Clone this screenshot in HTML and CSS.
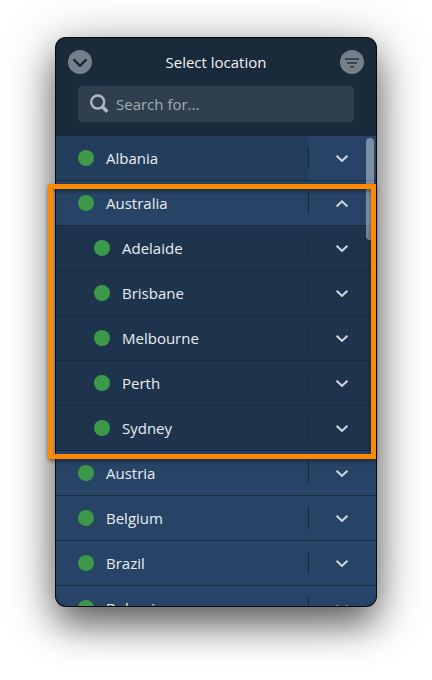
FILE: index.html
```
<!DOCTYPE html>
<html lang="en">
<head>
<meta charset="utf-8">
<title>Select location</title>
<link rel="stylesheet" href="styles.css">
</head>
<body>
<svg width="0" height="0" class="defs" aria-hidden="true">
  <symbol id="chevron" viewBox="0 0 14 8"><path d="M1.600 .7 7 5.900 12.400 .7" fill="none" stroke="currentColor" stroke-width="2"/></symbol>
</svg>
<main class="window">
  <header class="header">
    <div class="titlebar">
      <button class="round" aria-label="Close"><svg width="24" height="24" viewBox="0 0 24 24"><path d="M6.200 10 12 15.800 17.800 10" fill="none" stroke="#192a3b" stroke-width="2.400" stroke-linecap="round" stroke-linejoin="round"/></svg></button>
      <h1 class="title">Select location</h1>
      <button class="round" aria-label="Filter"><svg width="24" height="24" viewBox="0 0 24 24"><path d="M5 8h14v2H5zM7 12h10v2H7zM10 16h4v1l-1 1h-2l-1-1z" fill="#344452"/></svg></button>
    </div>
    <div class="search">
      <svg width="20" height="20" viewBox="0 0 20 20"><circle cx="7.700" cy="8" r="6.500" fill="none" stroke="currentColor" stroke-width="2.400"/><path d="M12 12.300 17.300 17.800" stroke="currentColor" stroke-width="3.400" fill="none"/></svg>
      <span>Search for...</span>
    </div>
  </header>
  <div class="list">
    <div class="row hovered"><div class="place"><i class="dot"></i><span>Albania</span></div><div class="toggle"><svg class="chev"><use href="#chevron"/></svg></div></div>
    <div class="row"><div class="place"><i class="dot"></i><span>Australia</span></div><div class="toggle"><svg class="chev up"><use href="#chevron"/></svg></div></div>
    <div class="row city"><div class="place"><i class="dot"></i><span>Adelaide</span></div><div class="toggle"><svg class="chev"><use href="#chevron"/></svg></div></div>
    <div class="row city"><div class="place"><i class="dot"></i><span>Brisbane</span></div><div class="toggle"><svg class="chev"><use href="#chevron"/></svg></div></div>
    <div class="row city"><div class="place"><i class="dot"></i><span>Melbourne</span></div><div class="toggle"><svg class="chev"><use href="#chevron"/></svg></div></div>
    <div class="row city"><div class="place"><i class="dot"></i><span>Perth</span></div><div class="toggle"><svg class="chev"><use href="#chevron"/></svg></div></div>
    <div class="row city"><div class="place"><i class="dot"></i><span>Sydney</span></div><div class="toggle"><svg class="chev"><use href="#chevron"/></svg></div></div>
    <div class="row"><div class="place"><i class="dot"></i><span>Austria</span></div><div class="toggle"><svg class="chev"><use href="#chevron"/></svg></div></div>
    <div class="row"><div class="place"><i class="dot"></i><span>Belgium</span></div><div class="toggle"><svg class="chev"><use href="#chevron"/></svg></div></div>
    <div class="row"><div class="place"><i class="dot"></i><span>Brazil</span></div><div class="toggle"><svg class="chev"><use href="#chevron"/></svg></div></div>
    <div class="row"><div class="place"><i class="dot"></i><span>Bulgaria</span></div><div class="toggle"><svg class="chev"><use href="#chevron"/></svg></div></div>
    <div class="scrollbar"></div>
  </div>
</main>
<div class="highlight"></div>
</body>
</html>
```
FILE: styles.css
```
* { box-sizing: border-box; }
body {
  margin: 0;
  height: 680px;
  padding: 38px 56px;
  overflow: hidden;
  position: relative;
  background: #fff;
  font: 15px/20px "Open Sans", sans-serif;
  color: #e9edf1;
}
.defs { position: absolute; }
.window {
  width: 320px;
  height: 568px;
  border-radius: 10px;
  overflow: hidden;
  background: #192a3b;
  box-shadow: 0 0 0 1px #05090d, 0 18px 36px rgba(0, 0, 0, .54), 0 6px 56px rgba(0, 0, 0, .28);
}
.header { height: 98px; padding: 12px 12px 0; }
.titlebar { display: flex; align-items: center; justify-content: space-between; height: 24px; }
.title { margin: 0; font-size: 15px; font-weight: 400; color: #f1f3f5; }
.round {
  width: 24px;
  height: 24px;
  padding: 0;
  border: 0;
  border-radius: 50%;
  background: #75808a;
}
.round svg { display: block; }
.search {
  display: flex;
  align-items: center;
  gap: 6px;
  height: 36px;
  margin: 12px 10px 0;
  padding: 0 12px;
  border-radius: 4px;
  background: #303f4e;
  color: #a3abb2;
}
.search svg { color: #b0b7bd; }
.list { position: relative; height: 470px; overflow: hidden; }
.row { display: flex; height: 45px; border-bottom: 1px solid #192c40; background: #274366; }
.place { flex: 1; display: flex; align-items: center; gap: 12px; padding-left: 22px; }
.hovered .place { background: #233e5d; }
.dot { width: 16px; height: 16px; border-radius: 50%; background: #3d994a; }
.toggle {
  width: 68px;
  display: flex;
  align-items: center;
  justify-content: center;
  background: linear-gradient(#192a3b, #192a3b) 0 11px / 1px 22px no-repeat;
}
.chev { width: 14px; height: 8px; margin-top: 1px; color: #d2d9e1; }
.up { transform: translateY(-.8px) rotate(180deg); }
.city { background: #1e344d; border-color: #192a3e; }
.city .place { padding-left: 38px; }
.scrollbar {
  position: absolute;
  top: 2px;
  right: 2px;
  width: 8px;
  height: 102px;
  border-radius: 4px;
  background: rgba(255, 255, 255, .4);
}
.highlight {
  position: absolute;
  left: 48px;
  top: 184px;
  width: 328px;
  height: 275px;
  border: 5px solid #ff8900;
  filter: drop-shadow(0 2px 2px rgba(0, 0, 0, .45));
}
```
